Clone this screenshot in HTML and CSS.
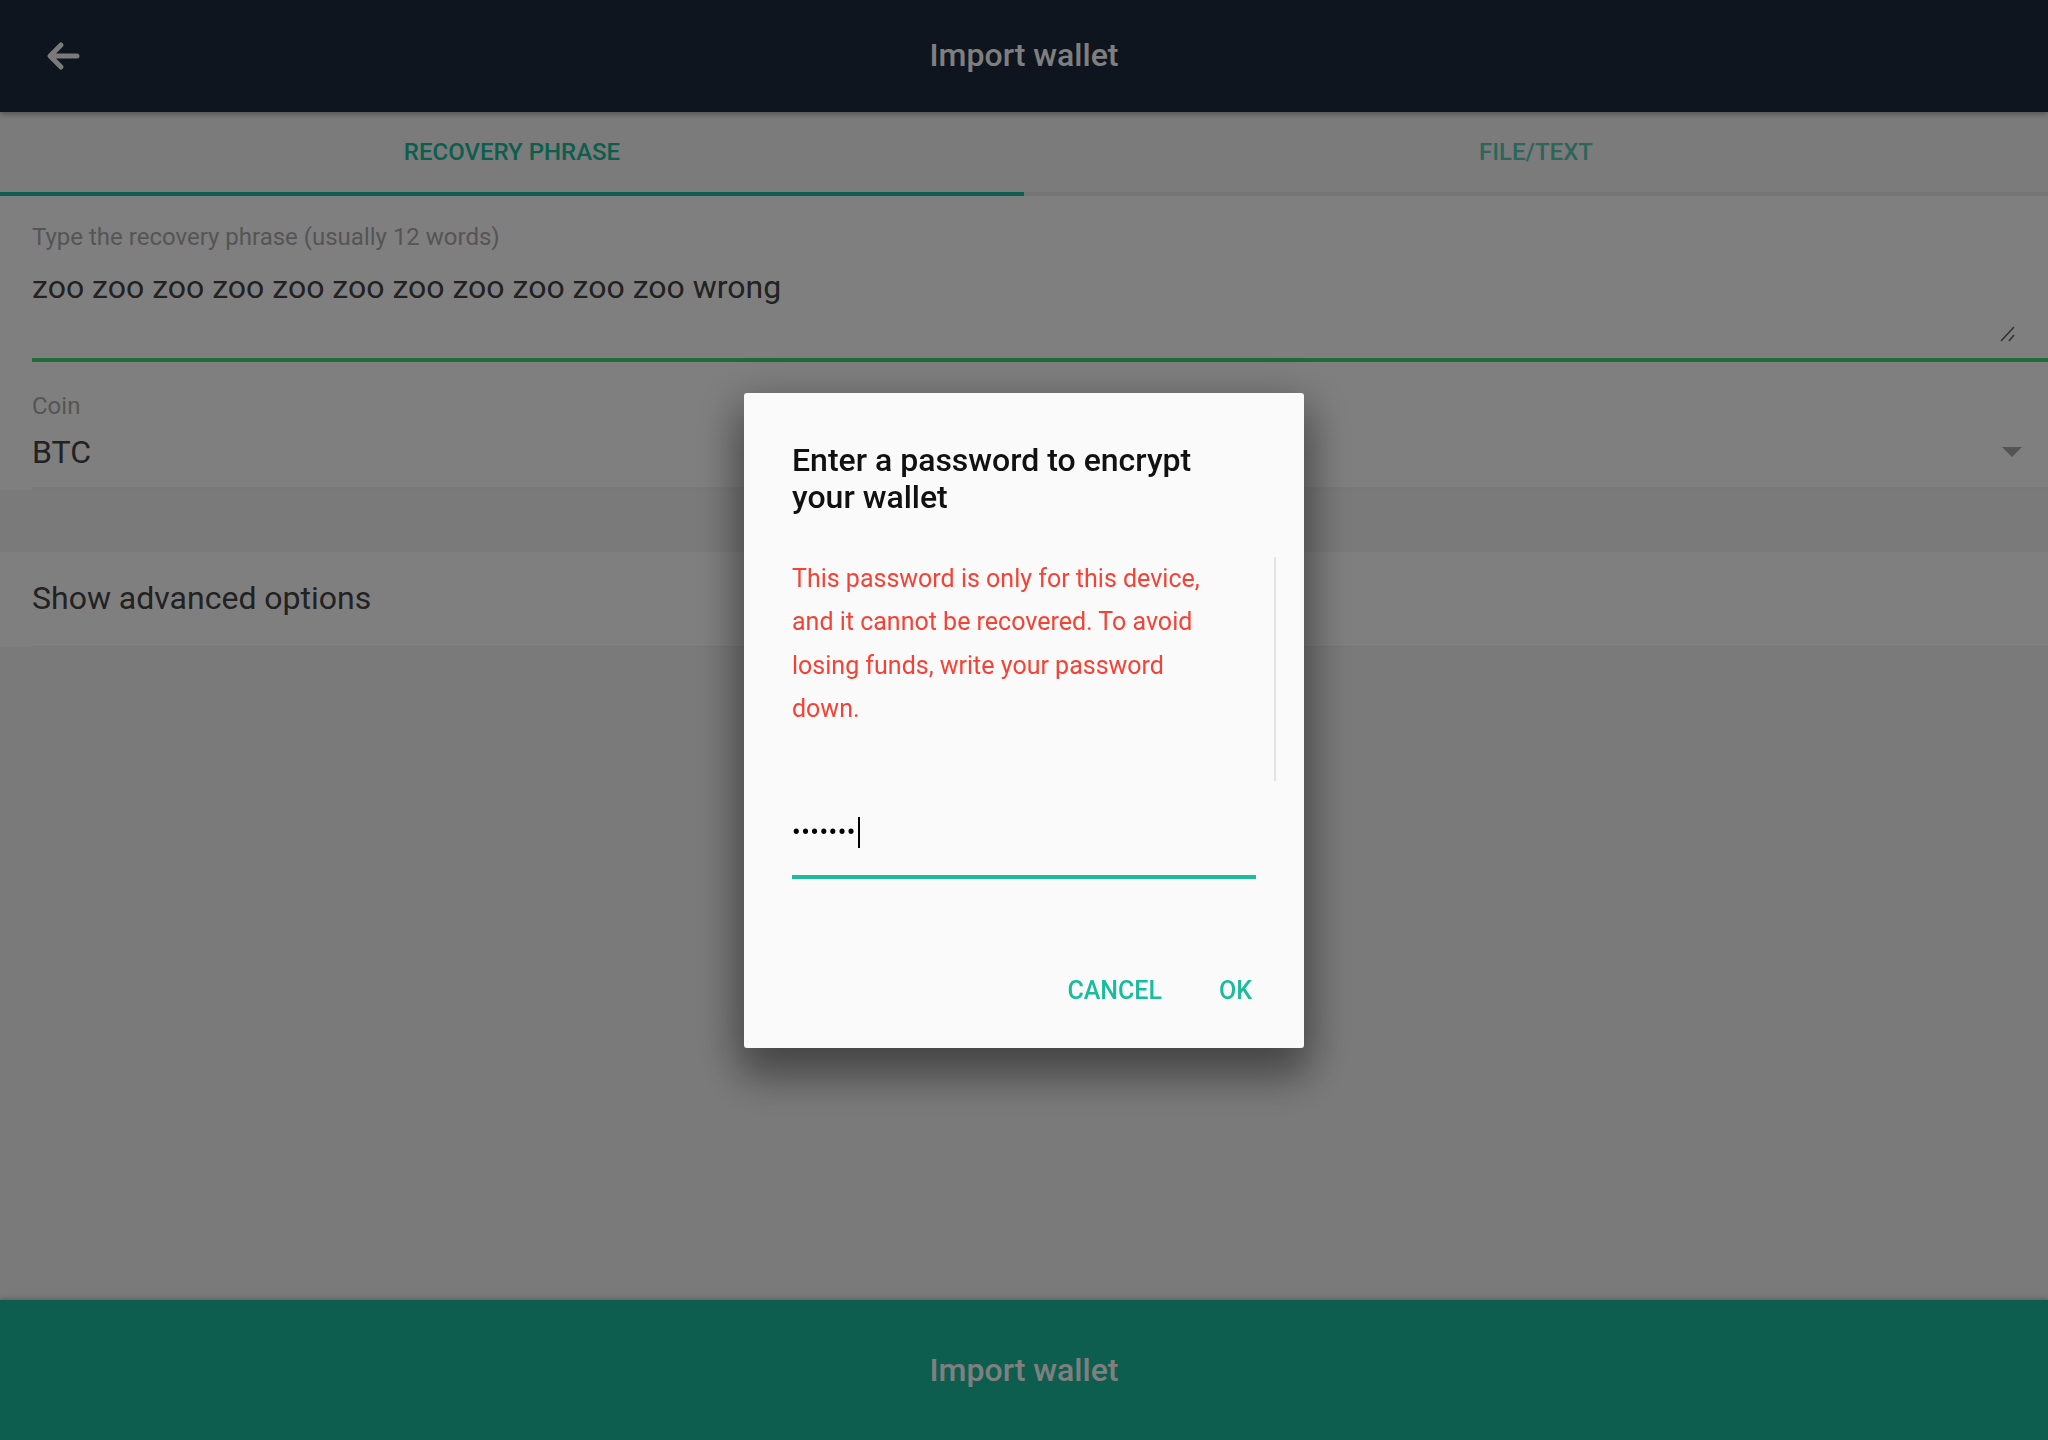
FILE: index.html
```html
<!DOCTYPE html>
<html lang="en">
<head>
<meta charset="utf-8">
<title>Import wallet</title>
<link rel="stylesheet" href="styles.css">
</head>
<body>
<div class="app">
  <header class="topbar">
    <button class="back" aria-label="Back">
      <svg width="40" height="40" viewBox="0 0 40 40"><path d="M37 20H11M21 9L10 20L21 31" fill="none" stroke="#f4f4f4" stroke-width="5" stroke-linecap="round" stroke-linejoin="round"/></svg>
    </button>
    <h1 class="title">Import wallet</h1>
    <div></div>
  </header>

  <nav class="tabs">
    <div class="tab active">RECOVERY PHRASE</div>
    <div class="tab">FILE/TEXT</div>
  </nav>

  <section class="phrase">
    <div class="phrase-field">
      <div class="float-label">Type the recovery phrase (usually 12 words)</div>
      <div class="phrase-text">zoo zoo zoo zoo zoo zoo zoo zoo zoo zoo zoo wrong</div>
      <svg class="grip" width="16" height="16" viewBox="0 0 16 16"><path d="M1 15L14 1M9 15L14 9" stroke="#666" stroke-width="1.6" fill="none"/></svg>
    </div>
  </section>

  <section class="coin">
    <div class="coin-inner">
      <div class="float-label">Coin</div>
      <div class="coin-value">
        <span>BTC</span>
        <svg class="caret" width="20" height="10" viewBox="0 0 20 10"><path d="M0 0H20L10 10Z" fill="#a8a8a8"/></svg>
      </div>
    </div>
  </section>

  <div class="band"></div>

  <div class="advanced">
    <div class="advanced-inner">Show advanced options</div>
  </div>

  <div class="spacer"></div>

  <div class="import-btn">Import wallet</div>
</div>

<div class="scrim">
  <div class="dialog" role="dialog">
    <h2 class="dialog-title">Enter a password to encrypt your wallet</h2>
    <div class="dialog-scroll">
      <p class="warning">This password is only for this device, and it cannot be recovered. To avoid losing funds, write your password down.</p>
    </div>
    <div class="pw-field">
      <span class="dots">•••••••</span><span class="cursor"></span>
    </div>
    <div class="actions">
      <span class="action">CANCEL</span>
      <span class="action">OK</span>
    </div>
  </div>
</div>
</body>
</html>
```

FILE: styles.css
```css
* { box-sizing: border-box; }

html, body {
  margin: 0;
  padding: 0;
  height: 1440px;
  overflow: hidden;
}

body {
  font-family: Roboto, "Noto Sans", "Liberation Sans", sans-serif;
  background: #ffffff;
  color: #444444;
}

.app {
  height: 1440px;
  display: flex;
  flex-direction: column;
}

/* top bar */
.topbar {
  height: 112px;
  flex: none;
  background: #1c2a3c;
  display: grid;
  grid-template-columns: 1fr auto 1fr;
  align-items: center;
  box-shadow: 0 2px 6px rgba(0, 0, 0, 0.35);
  position: relative;
  z-index: 1;
}

.back {
  margin-left: 40px;
  width: 40px;
  height: 40px;
  padding: 0;
  border: 0;
  background: none;
  display: flex;
  justify-self: start;
}

.title {
  margin: 0 0 2px;
  font-size: 32px;
  font-weight: 500;
  color: #ffffff;
  line-height: 40px;
}

/* tabs */
.tabs {
  height: 84px;
  flex: none;
  display: flex;
  background: #f6f6f6;
}

.tab {
  flex: 1;
  display: flex;
  align-items: center;
  justify-content: center;
  font-size: 24px;
  font-weight: 500;
  color: #1abc9c;
  opacity: 0.72;
  border-bottom: 4px solid #e6e6e6;
}

.tab.active {
  opacity: 1;
  border-bottom-color: #1abc9c;
}

/* recovery phrase field */
.phrase {
  flex: none;
  padding-left: 32px;
}

.phrase-field {
  position: relative;
  padding-top: 27px;
  padding-bottom: 51px;
  border-bottom: 4px solid #3ad672;
}

.float-label {
  font-size: 24px;
  line-height: 28px;
  color: #aaaaaa;
}

.phrase-text {
  margin-top: 16px;
  font-size: 32px;
  line-height: 40px;
  color: #444444;
}

.grip {
  position: absolute;
  right: 32px;
  bottom: 16px;
}

/* coin */
.coin {
  flex: none;
}

.coin-inner {
  margin-left: 32px;
  padding-top: 30px;
  padding-bottom: 15px;
  border-bottom: 3px solid #f3f3f3;
}

.coin-value {
  margin-top: 12px;
  display: flex;
  align-items: center;
  justify-content: space-between;
  padding-right: 26px;
  font-size: 32px;
  line-height: 40px;
  color: #444444;
}

.band {
  height: 62px;
  flex: none;
  background: #f5f5f5;
}

.advanced {
  flex: none;
}

.advanced-inner {
  margin-left: 32px;
  padding-top: 26px;
  padding-bottom: 28px;
  font-size: 32px;
  line-height: 40px;
  color: #444444;
  border-bottom: 1px solid #eeeeee;
}

.spacer {
  flex: 1;
  background: #f5f5f5;
}

.import-btn {
  height: 140px;
  flex: none;
  background: #1abc9c;
  color: #ffffff;
  font-size: 32px;
  font-weight: 500;
  display: flex;
  align-items: center;
  justify-content: center;
  box-shadow: 0 -2px 4px rgba(0, 0, 0, 0.18);
}

/* dialog */
.scrim {
  position: fixed;
  inset: 0;
  z-index: 10;
  background: rgba(0, 0, 0, 0.5);
  display: flex;
  align-items: center;
  justify-content: center;
}

.dialog {
  width: 560px;
  background: #fafafa;
  border-radius: 3px;
  padding: 49px 48px 42px;
  box-shadow: 0 26px 40px 4px rgba(0, 0, 0, 0.32), 0 10px 48px 8px rgba(0, 0, 0, 0.2);
}

.dialog-title {
  margin: 0;
  font-size: 32px;
  font-weight: 500;
  line-height: 37.5px;
  color: #111111;
}

.dialog-scroll {
  margin-top: 40px;
  margin-right: -20px;
  height: 224px;
  border-right: 2px solid #e3e3e3;
}

.warning {
  margin: 0;
  max-width: 440px;
  font-size: 25px;
  line-height: 43.6px;
  color: #f44336;
}

.pw-field {
  margin-top: 36px;
  padding-bottom: 27px;
  border-bottom: 4px solid #1abc9c;
  display: flex;
  align-items: flex-start;
}

.dots {
  font-size: 25.6px;
  line-height: 31px;
  letter-spacing: 0.5px;
  color: #000000;
}

.cursor {
  width: 2px;
  height: 31px;
  background: #000000;
  margin-left: 2px;
}

.actions {
  margin-top: 97px;
  display: flex;
  justify-content: flex-end;
  gap: 57px;
  padding-right: 4px;
}

.action {
  font-size: 25px;
  line-height: 30px;
  font-weight: 500;
  color: #1abc9c;
}
```
